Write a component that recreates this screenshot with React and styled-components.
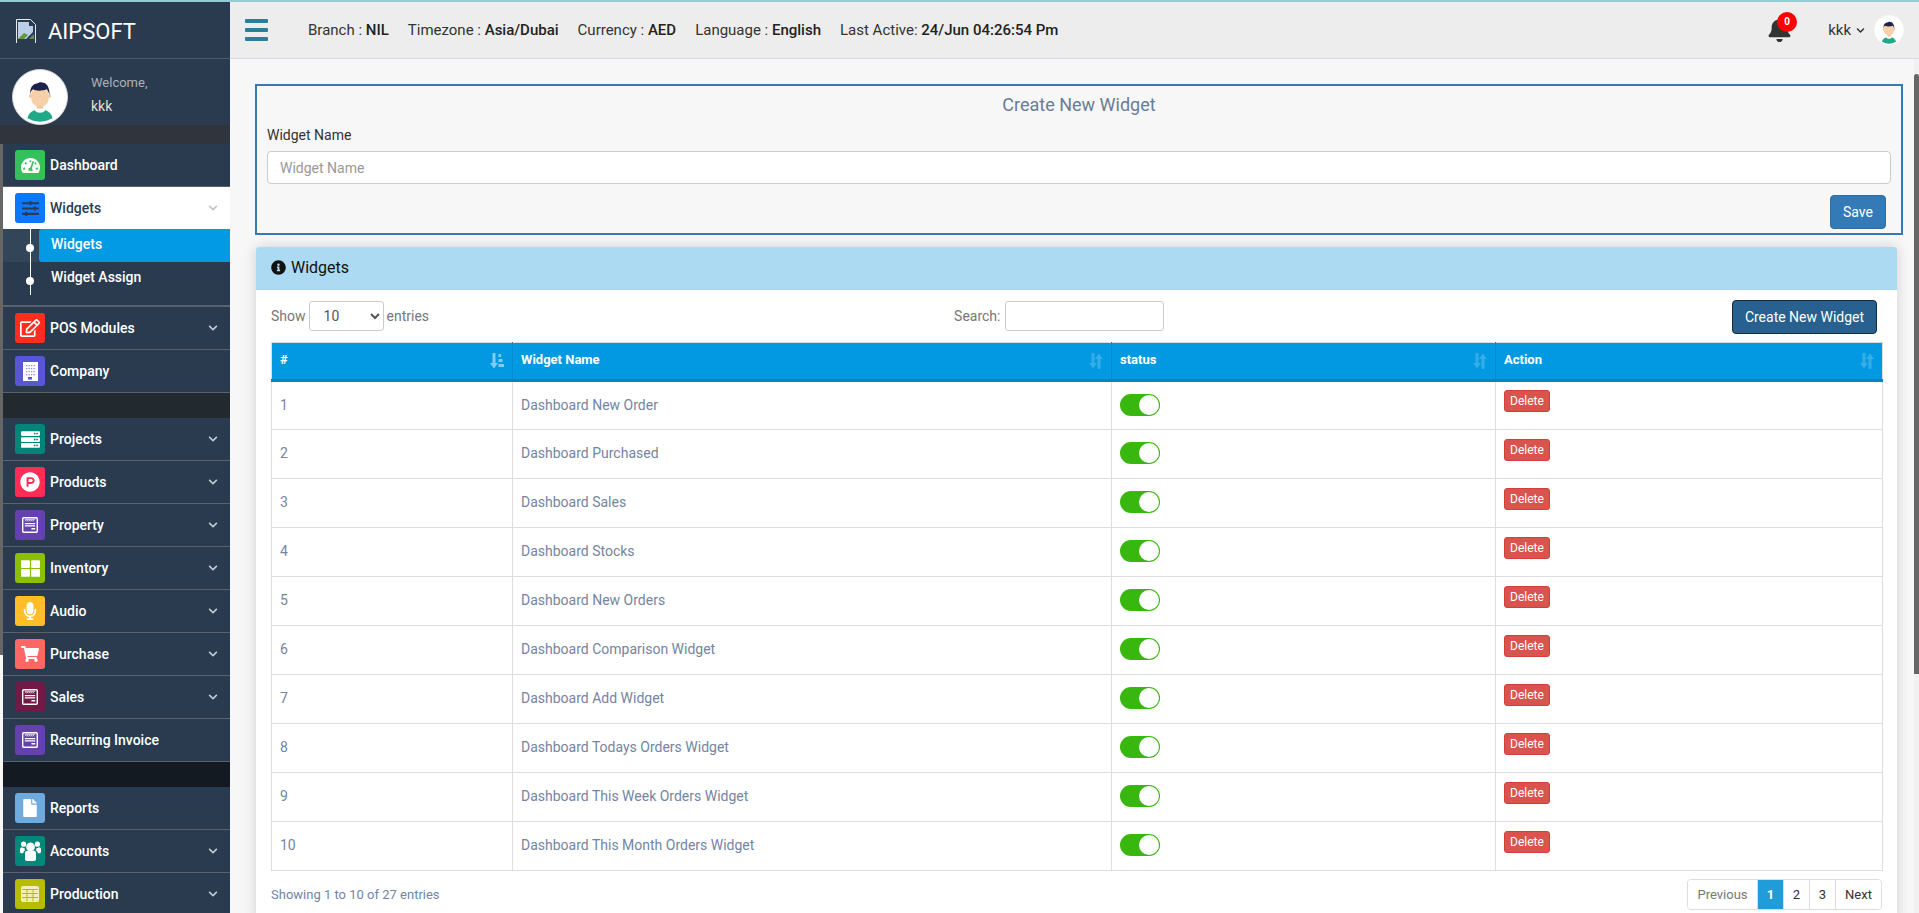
import React from 'react';
import styled, { createGlobalStyle } from 'styled-components';
import {
  FaTachometerAlt, FaSlidersH, FaRegEdit, FaServer, FaThLarge, FaMicrophone, FaShoppingCart,
  FaFile, FaChevronDown, FaBell, FaInfoCircle, FaProductHunt,
} from 'react-icons/fa';

const GlobalStyle = createGlobalStyle`
  html, body {
    margin: 0;
    height: 100%;
    overflow: hidden;
    background: #f7f7f7;
    font-family: Roboto, "Liberation Sans", sans-serif;
    font-size: 14px;
    color: #333;
  }
  * { box-sizing: border-box; }
`;

const BuildingIcon = () => (
  <svg width="15" height="19" viewBox="0 0 15 19">
    <rect width="15" height="19" fill="#fff" />
    {[3, 6, 9, 12].map(y => [3, 5.5, 8, 10.5].map(x => (
      <rect key={`${x}-${y}`} x={x} y={y} width="1.3" height="1.3" fill="#8d8ce6" />
    )))}
    <rect x="5" y="15" width="4" height="2.5" fill="#5856d6" />
  </svg>
);

const InvoiceIcon = () => (
  <svg width="16" height="16" viewBox="0 0 17 17">
    <rect x="0.75" y="0.75" width="15.5" height="15.5" rx="1" fill="none" stroke="#fff" strokeWidth="1.5" />
    <path d="M3 2.5h11M3 4.5l1-1 1 1 1-1 1 1 1-1 1 1 1-1 1 1 1-1 1 1" fill="none" stroke="#fff" strokeWidth="0.8" />
    <path d="M3 7h11M3 9.5h11M10 12.5h4" fill="none" stroke="#fff" strokeWidth="1.4" />
  </svg>
);

const UsersIcon = () => (
  <svg width="21" height="20" viewBox="0 0 21 20" fill="#fff">
    <circle cx="10.5" cy="6" r="4.4" />
    <circle cx="3.6" cy="3.2" r="2.6" />
    <circle cx="17.4" cy="3.2" r="2.6" />
    <path d="M5 12c0-2 2-2.6 3-2.6 1.4 1 3.6 1 5 0 1 0 3 .6 3 2.6v6c0 1-1 2-2 2H7c-1 0-2-1-2-2z" />
    <path d="M0 8.5C0 7 1 6.300 2 6.200c1 .8 2 1 2.800 1-.2 1-.2 2 .2 2.300-1 .5-1.600 1.500-1.800 2.800H1.500C.5 12.300 0 11.500 0 10.500zM21 8.500C21 7 20 6.300 19 6.200c-1 .8-2 1-2.800 1 .2 1 .2 2-.2 2.300 1 .5 1.600 1.500 1.800 2.800h1.700c1 0 1.500-.8 1.500-1.800z" />
  </svg>
);

const GridIcon = () => (
  <svg width="18" height="16" viewBox="0 0 18 16">
    <rect width="18" height="16" rx="2" fill="#eef0b8" />
    <path d="M6 3.500v12M12 3.500v12M1 3.500h16M1 7.500h16M1 11.500h16" stroke="#b7bc00" strokeWidth="1" />
  </svg>
);

const BrokenImage = () => (
  <svg width="20" height="24" viewBox="0 0 20 24">
    <path d="M.5 24V.5h14l5 5V24" fill="none" stroke="#e8e8e8" />
    <path d="M2 3h11v4h4v6l-7 7H2z" fill="#b9cfe8" />
    <path d="M2 20l6-6 4 2-4 4z" fill="#5f9a3a" />
    <path d="M13 20l5-5v5z" fill="#5f9a3a" />
  </svg>
);

const Avatar = ({ size }) => (
  <svg width={size} height={size} viewBox="0 0 56 56">
    <circle cx="28" cy="28" r="27.5" fill="#fff" />
    <path d="M15 50c1-6 6-9 13-9s12 3 13 9a27 27 0 0 1-26 0z" fill="#1eaa86" />
    <path d="M23 39h10v3c-1 3-9 3-10 0z" fill="#fff" />
    <rect x="24.5" y="33" width="7" height="7" rx="2" fill="#eec39a" />
    <circle cx="18.5" cy="27" r="2" fill="#f3c79d" />
    <circle cx="37.5" cy="27" r="2" fill="#f3c79d" />
    <path d="M19 24c0-6 18-6 18 0v6c0 5-5 8-9 8s-9-3-9-8z" fill="#f7d0a8" />
    <path d="M18 26c-1-8 3-12 7-12 1-1 4-2 5-1 5 0 8 5 8 13-1-3-2-5-3-6-5 2-11 2-14 0-2 1-3 3-3 6z" fill="#1e2148" />
  </svg>
);

const SortIcon = ({ active }) => (
  <SortGlyph viewBox="0 0 14 16" $active={active}>
    {active ? (
      <path d="M2.500 0h3v10H8l-4 5.500L0 10h2.500zM8.500 1h2.500v3H8.500zM8.500 6h4v3h-4zM8.500 11H14v3H8.500z" />
    ) : (
      <path d="M2.500 0h3v10H8l-4 5.500L0 10h2.500zM8.500 16h3V6H14L10 .5 6 6h2.500z" />
    )}
  </SortGlyph>
);

const MENU_TOP = [
  { label: 'POS Modules', color: '#ff2d1f', icon: <FaRegEdit size={20} />, more: true },
  { label: 'Company', color: '#5856d6', icon: <BuildingIcon /> },
];

const MENU_MID = [
  { label: 'Projects', color: '#008578', icon: <FaServer size={19} />, more: true },
  { label: 'Products', color: '#ff2d55', icon: <FaProductHunt size={20} />, more: true },
  { label: 'Property', color: '#6441ac', icon: <InvoiceIcon />, more: true },
  { label: 'Inventory', color: '#8ac000', icon: <FaThLarge size={19} />, more: true },
  { label: 'Audio', color: '#ffbd27', icon: <FaMicrophone size={18} />, more: true },
  { label: 'Purchase', color: '#ff6666', icon: <FaShoppingCart size={18} />, more: true },
  { label: 'Sales', color: '#701a46', icon: <InvoiceIcon />, more: true },
  { label: 'Recurring Invoice', color: '#6441ac', icon: <InvoiceIcon /> },
];

const MENU_BOTTOM = [
  { label: 'Reports', color: '#6eaadb', icon: <FaFile size={18} /> },
  { label: 'Accounts', color: '#00897b', icon: <UsersIcon />, more: true },
  { label: 'Production', color: '#b7bc00', icon: <GridIcon />, more: true },
];

const WIDGETS = [
  'Dashboard New Order',
  'Dashboard Purchased',
  'Dashboard Sales',
  'Dashboard Stocks',
  'Dashboard New Orders',
  'Dashboard Comparison Widget',
  'Dashboard Add Widget',
  'Dashboard Todays Orders Widget',
  'Dashboard This Week Orders Widget',
  'Dashboard This Month Orders Widget',
];

const MenuRow = ({ item }) => (
  <NavRow>
    <Tile $color={item.color}>{item.icon}</Tile>
    <NavLabel>{item.label}</NavLabel>
    {item.more && <FaChevronDown size={10} color="#c3cad3" />}
  </NavRow>
);

const App = () => {
  return (
    <Page>
      <GlobalStyle />
      <TopStrip />
      <Body>
        <Sidebar>
          <Brand>
            <BrokenImage />
            <BrandName>AIPSOFT</BrandName>
          </Brand>
          <Profile>
            <AvatarRing><Avatar size={54} /></AvatarRing>
            <ProfileText>
              <Welcome>Welcome,</Welcome>
              <UserName>kkk</UserName>
            </ProfileText>
          </Profile>
          <Divider $color="#2f343d" $height={19} />
          <Nav>
            <RailThumb />
            <NavRow>
              <Tile $color="#34c15c"><FaTachometerAlt size={19} /></Tile>
              <NavLabel>Dashboard</NavLabel>
            </NavRow>
            <NavRow $open>
              <Tile $color="#0a78ff"><FaSlidersH size={17} color="#2a3b50" /></Tile>
              <NavLabel $dark>Widgets</NavLabel>
              <FaChevronDown size={10} color="#bcc5cf" />
            </NavRow>
            <SubMenu>
              <SubRow $active><SubLabel $active>Widgets</SubLabel></SubRow>
              <SubRow><SubLabel>Widget Assign</SubLabel></SubRow>
            </SubMenu>
            {MENU_TOP.map(item => <MenuRow key={item.label} item={item} />)}
            <Divider $color="#22292f" $height={25} />
            {MENU_MID.map(item => <MenuRow key={item.label} item={item} />)}
            <Divider $color="#141a22" $height={25} />
            {MENU_BOTTOM.map(item => <MenuRow key={item.label} item={item} />)}
          </Nav>
        </Sidebar>

        <Main>
          <Header>
            <Burger><span /><span /><span /></Burger>
            <HeaderInfo>
              <span>Branch : <b>NIL</b></span>
              <span>Timezone : <b>Asia/Dubai</b></span>
              <span>Currency : <b>AED</b></span>
              <span>Language : <b>English</b></span>
              <span>Last Active: <b>24/Jun 04:26:54 Pm</b></span>
            </HeaderInfo>
            <HeaderRight>
              <BellWrap>
                <FaBell size={25} color="#333" />
                <Badge>0</Badge>
              </BellWrap>
              <HeaderUser>kkk <FaChevronDown size={9} color="#333" /></HeaderUser>
              <Avatar size={30} />
            </HeaderRight>
          </Header>

          <ScrollTrack><ScrollThumb /></ScrollTrack>

          <Content>
            <FormBox>
              <FormTitle>Create New Widget</FormTitle>
              <FieldLabel>Widget Name</FieldLabel>
              <TextInput placeholder="Widget Name" />
              <FormActions>
                <SaveButton>Save</SaveButton>
              </FormActions>
            </FormBox>

            <Card>
              <CardHeader>
                <FaInfoCircle size={15} color="#111" />
                Widgets
              </CardHeader>
              <CardBody>
                <Controls>
                  <LengthControl>
                    Show
                    <LengthSelect defaultValue="10">
                      <option>10</option>
                      <option>25</option>
                      <option>50</option>
                    </LengthSelect>
                    entries
                  </LengthControl>
                  <SearchControl>
                    Search:
                    <SearchInput />
                  </SearchControl>
                  <CreateButton>Create New Widget</CreateButton>
                </Controls>

                <Table>
                  <colgroup>
                    <col style={{ width: 241 }} />
                    <col style={{ width: 599 }} />
                    <col style={{ width: 384 }} />
                    <col style={{ width: 387 }} />
                  </colgroup>
                  <thead>
                    <tr>
                      <Th># <SortIcon active /></Th>
                      <Th>Widget Name <SortIcon /></Th>
                      <Th>status <SortIcon /></Th>
                      <Th>Action <SortIcon /></Th>
                    </tr>
                  </thead>
                  <tbody>
                    {WIDGETS.map((name, index) => (
                      <tr key={name}>
                        <Td>{index + 1}</Td>
                        <Td>{name}</Td>
                        <Td><Toggle /></Td>
                        <Td><DeleteButton>Delete</DeleteButton></Td>
                      </tr>
                    ))}
                  </tbody>
                </Table>

                <TableFooter>
                  <Showing>Showing 1 to 10 of 27 entries</Showing>
                  <Pagination>
                    <PageLink $width={69} $muted>Previous</PageLink>
                    <PageLink $width={26} $current>1</PageLink>
                    <PageLink $width={26}>2</PageLink>
                    <PageLink $width={26}>3</PageLink>
                    <PageLink $width={46}>Next</PageLink>
                  </Pagination>
                </TableFooter>
              </CardBody>
            </Card>
          </Content>
        </Main>
      </Body>
    </Page>
  );
};

export default App;

const Page = styled.div`
  height: 913px;
  overflow: hidden;
  display: flex;
  flex-direction: column;
`;

const TopStrip = styled.div`
  height: 2px;
  flex: none;
  background: #93cdd3;
`;

const Body = styled.div`
  flex: 1;
  display: flex;
  min-height: 0;
`;

const Sidebar = styled.aside`
  width: 230px;
  flex: none;
  display: flex;
  flex-direction: column;
`;

const Brand = styled.div`
  height: 57px;
  flex: none;
  display: flex;
  align-items: center;
  padding: 2px 0 0 16px;
  gap: 12px;
  background: #2a3b50;
  border-bottom: 1px solid #4f5a68;
`;

const BrandName = styled.span`
  font-size: 22px;
  color: #fff;
`;

const Profile = styled.div`
  height: 66px;
  flex: none;
  display: flex;
  align-items: flex-start;
  padding: 10px 0 0 12px;
  background: #2a3b50;
`;

const AvatarRing = styled.div`
  width: 56px;
  height: 56px;
  border-radius: 50%;
  background: #fff;
  border: 1px solid #cfd4da;
`;

const ProfileText = styled.div`
  margin-left: 23px;
  padding-top: 5px;
`;

const Welcome = styled.div`
  font-size: 13px;
  line-height: 18px;
  color: #aab1ba;
`;

const UserName = styled.div`
  font-size: 14px;
  line-height: 18px;
  margin-top: 5px;
  color: #e6dfcb;
`;

const Divider = styled.div`
  height: ${props => props.$height}px;
  flex: none;
  background: ${props => props.$color};
`;

const Nav = styled.nav`
  position: relative;
  flex: 1;
  padding-left: 3px;
`;

const RailThumb = styled.div`
  position: absolute;
  left: 0;
  top: 0;
  width: 3px;
  height: 511px;
  background: #666;
`;

const NavRow = styled.div`
  height: ${props => (props.$open ? 42 : 43)}px;
  display: flex;
  align-items: center;
  padding: 0 12px;
  gap: 5px;
  background: ${props => (props.$open ? '#fff' : '#2a3b50')};
  border-bottom: ${props => (props.$open ? 'none' : '1px solid #5a626d')};
`;

const Tile = styled.span`
  width: 30px;
  height: 30px;
  flex: none;
  display: flex;
  align-items: center;
  justify-content: center;
  border-radius: 3px;
  color: #fff;
  background: ${props => props.$color};
`;

const NavLabel = styled.span`
  flex: 1;
  font-weight: 500;
  font-size: 14px;
  color: ${props => (props.$dark ? '#2a3b50' : '#fff')};
`;

const SubMenu = styled.div`
  position: relative;
  height: 78px;
  background: #2a3b50;
  border-bottom: 2px solid #5a626d;
  &::before {
    content: '';
    position: absolute;
    z-index: 1;
    left: 27px;
    top: 0;
    width: 1px;
    height: 66px;
    background: #fff;
  }
`;

const SubRow = styled.div`
  position: relative;
  height: 33px;
  padding-left: 36px;
  background: ${props => (props.$active ? '#334558' : 'transparent')};
  &::after {
    content: '';
    position: absolute;
    left: 23px;
    top: 15px;
    width: 8px;
    height: 8px;
    border-radius: 50%;
    background: #fff;
  }
`;

const SubLabel = styled.div`
  height: 33px;
  line-height: 31px;
  padding-left: 12px;
  color: #fff;
  font-weight: 500;
  border-radius: 3px 0 0 3px;
  background: ${props => (props.$active ? '#029ae4' : 'transparent')};
`;

const Main = styled.main`
  position: relative;
  flex: 1;
  min-width: 0;
  display: flex;
  flex-direction: column;
`;

const Header = styled.header`
  height: 57px;
  flex: none;
  display: flex;
  align-items: center;
  padding: 0 15px 0 15px;
  background: #ededed;
  border-bottom: 1px solid #d8d8e2;
`;

const Burger = styled.div`
  width: 23px;
  display: flex;
  flex-direction: column;
  gap: 5px;
  span {
    height: 4px;
    background: #2b7f96;
    border-radius: 1px;
  }
`;

const HeaderInfo = styled.div`
  margin-left: 40px;
  display: flex;
  gap: 19px;
  font-size: 15px;
  color: #333;
  b { font-weight: 500; color: #222; }
`;

const HeaderRight = styled.div`
  margin-left: auto;
  display: flex;
  align-items: center;
`;

const BellWrap = styled.div`
  position: relative;
  display: flex;
  margin: -2px 36px 0 0;
`;

const Badge = styled.span`
  position: absolute;
  top: -5px;
  left: 10px;
  width: 20px;
  height: 20px;
  border-radius: 50%;
  background: #f00;
  color: #fff;
  font-size: 10px;
  font-weight: 700;
  line-height: 20px;
  text-align: center;
`;

const HeaderUser = styled.span`
  display: flex;
  align-items: center;
  gap: 5px;
  margin-right: 9px;
  font-size: 15px;
  color: #333;
`;

const ScrollTrack = styled.div`
  position: absolute;
  top: 57px;
  right: 0;
  bottom: 0;
  width: 5px;
  background: #f1f1f1;
  z-index: 2;
`;

const ScrollThumb = styled.div`
  margin-top: 15px;
  height: 600px;
  background: #666;
  border-radius: 3px 3px 0 0;
`;

const Content = styled.div`
  flex: 1;
  padding: 25px 16px 0 25px;
`;

const FormBox = styled.section`
  height: 151px;
  padding: 7px 10px 0;
  border: 2px solid #337ab7;
  background: #f7f7f7;
`;

const FormTitle = styled.h4`
  margin: 0;
  font-size: 18px;
  font-weight: 400;
  line-height: 24px;
  text-align: center;
  color: #6b7c93;
`;

const FieldLabel = styled.label`
  display: block;
  margin-top: 8px;
  line-height: 20px;
  font-size: 14px;
  color: #333;
`;

const TextInput = styled.input`
  display: block;
  width: 100%;
  height: 33px;
  margin-top: 6px;
  padding: 0 12px;
  font: inherit;
  border: 1px solid #ccc;
  border-radius: 4px;
  background: #fff;
  &::placeholder { color: #999; }
`;

const FormActions = styled.div`
  display: flex;
  justify-content: flex-end;
  padding: 11px 5px 0 0;
`;

const SaveButton = styled.button`
  width: 56px;
  height: 34px;
  font: inherit;
  color: #fff;
  background: #337ab7;
  border: 1px solid #2e6da4;
  border-radius: 4px;
`;

const Card = styled.section`
  margin: 12px 6px 0 1px;
  background: #fff;
  border-radius: 3px;
  box-shadow: 0 0 14px rgba(0, 0, 0, 0.16);
`;

const CardHeader = styled.div`
  height: 43px;
  display: flex;
  align-items: center;
  gap: 5px;
  padding: 0 0 2px 15px;
  font-size: 16px;
  color: #111;
  background: #acdaf3;
  border-radius: 3px 3px 0 0;
`;

const CardBody = styled.div`
  padding: 11px 15px 12px 15px;
`;

const Controls = styled.div`
  display: flex;
  align-items: flex-start;
  height: 41px;
  font-size: 14px;
  color: #777;
`;

const LengthControl = styled.label`
  display: flex;
  align-items: center;
  gap: 3px;
  height: 30px;
`;

const LengthSelect = styled.select`
  width: 75px;
  height: 30px;
  padding: 0 10px;
  font: inherit;
  color: #555;
  background: #fff;
  border: 1px solid #ccc;
  border-radius: 3px;
`;

const SearchControl = styled.label`
  display: flex;
  align-items: center;
  gap: 5px;
  height: 30px;
  margin-left: 525px;
`;

const SearchInput = styled.input`
  width: 159px;
  height: 30px;
  border: 1px solid #ccc;
  border-radius: 3px;
  background: #fff;
`;

const CreateButton = styled.button`
  width: 145px;
  height: 34px;
  margin: -1px 5px 0 auto;
  font: inherit;
  font-size: 14px;
  color: #fff;
  background: #286090;
  border: 1px solid #122b40;
  border-radius: 4px;
`;

const Table = styled.table`
  width: 1611px;
  table-layout: fixed;
  border-collapse: collapse;
`;

const Th = styled.th`
  position: relative;
  height: 38px;
  padding: 0 8px 3px;
  text-align: left;
  font-size: 13px;
  font-weight: 700;
  color: #fff;
  background: #0299e2;
  border: 1px solid #0288d1;
  border-top: 1px solid #ddd;
  border-bottom: 3px solid #0284c7;
  &:first-child { border-left: 1px solid #ddd; }
  &:last-child { border-right: 1px solid #ddd; }
`;

const SortGlyph = styled.svg`
  position: absolute;
  right: 8px;
  top: 10px;
  width: 14px;
  height: 16px;
  fill: #fff;
  opacity: ${props => (props.$active ? 0.5 : 0.2)};
`;

const Td = styled.td`
  height: 49px;
  padding: 0 8px 2px;
  font-size: 14px;
  color: #7485a0;
  border: 1px solid #ddd;
  vertical-align: middle;
`;

const Toggle = styled.span`
  display: block;
  position: relative;
  width: 40px;
  height: 22px;
  border-radius: 11px;
  background: #38b80e;
  &::after {
    content: '';
    position: absolute;
    right: 1px;
    top: 1px;
    width: 20px;
    height: 20px;
    border-radius: 50%;
    background: #fff;
  }
`;

const DeleteButton = styled.button`
  display: block;
  width: 46px;
  height: 22px;
  margin-top: -7px;
  padding: 0;
  font: inherit;
  font-size: 12px;
  color: #fff;
  background: #d9534f;
  border: 1px solid #d43f3a;
  border-radius: 3px;
`;

const TableFooter = styled.div`
  display: flex;
  align-items: center;
  justify-content: space-between;
  width: 1611px;
  margin-top: 8px;
`;

const Showing = styled.div`
  font-size: 13px;
  color: #7485a0;
`;

const Pagination = styled.div`
  display: flex;
  height: 31px;
  border: 1px solid #ddd;
  border-radius: 4px;
  background: #fff;
  overflow: hidden;
`;

const PageLink = styled.span`
  width: ${props => props.$width}px;
  line-height: 29px;
  font-size: 13px;
  text-align: center;
  font-weight: ${props => (props.$current ? 700 : 400)};
  color: ${props => (props.$current ? '#fff' : props.$muted ? '#777' : '#333')};
  background: ${props => (props.$current ? '#209cd8' : '#fff')};
  & + & { border-left: 1px solid #ddd; }
`;
